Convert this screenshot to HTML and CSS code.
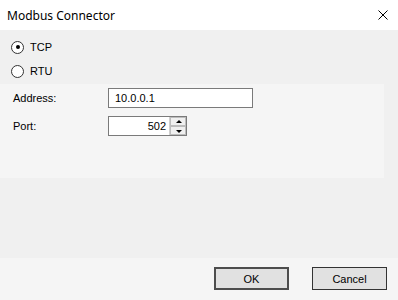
FILE: index.html
```html
<!DOCTYPE html>
<html lang="en">
<head>
    <meta charset="UTF-8">
    <title>Modbus Connector</title>
    <link rel="stylesheet" href="styles.css">
</head>
<body>
    <div class="dialog">
        <div class="titlebar">
            <span class="title">Modbus Connector</span>
            <svg class="close" width="10" height="10" viewBox="0 0 10 10">
                <path d="M0.5 0.5 L9.5 9.5 M9.5 0.5 L0.5 9.5" stroke="#000" stroke-width="1" fill="none"/>
            </svg>
        </div>
        <div class="content">
            <div class="options">
                <label class="option"><span class="radio checked"></span>TCP</label>
                <label class="option"><span class="radio"></span>RTU</label>
            </div>
            <div class="panel">
                <div class="field">
                    <span class="label">Address:</span>
                    <div class="textbox address">10.0.0.1</div>
                </div>
                <div class="field">
                    <span class="label">Port:</span>
                    <div class="textbox port">
                        <span class="value">502</span>
                        <div class="spinner">
                            <div class="spin up"></div>
                            <div class="spin down"></div>
                        </div>
                    </div>
                </div>
            </div>
        </div>
        <div class="footer">
            <button class="btn default">OK</button>
            <button class="btn">Cancel</button>
        </div>
    </div>
</body>
</html>
```

FILE: styles.css
```css
body {
    margin: 0;
    font-family: "Liberation Sans", Arial, sans-serif;
    font-size: 11px;
    color: #000;
}
.dialog {
    width: 398px;
    height: 300px;
    display: flex;
    flex-direction: column;
}
.titlebar {
    height: 30px;
    background-color: #ffffff;
    display: flex;
    align-items: center;
    justify-content: space-between;
    padding: 0 10px 0 7px;
    box-sizing: border-box;
}
.title {
    font-family: "Noto Sans", "Open Sans", sans-serif;
    font-size: 12px;
}
.content {
    height: 228px;
    background-color: #f0f0f0;
}
.options {
    padding: 5px 0 1px 11px;
}
.option {
    height: 24px;
    display: flex;
    align-items: center;
    gap: 6px;
}
.radio {
    width: 11px;
    height: 11px;
    border: 1px solid #333;
    border-radius: 50%;
    background-color: #fff;
    position: relative;
}
.radio.checked::after {
    content: "";
    position: absolute;
    left: 3.5px;
    top: 3.5px;
    width: 4px;
    height: 4px;
    border-radius: 50%;
    background-color: #000;
}
.panel {
    width: 384px;
    height: 94px;
    background-color: #f5f5f5;
    padding: 4px 0 0 0;
    box-sizing: border-box;
    display: flex;
    flex-direction: column;
    gap: 8px;
}
.field {
    display: flex;
    align-items: center;
    height: 20px;
}
.label {
    width: 95px;
    padding-left: 13px;
}
.textbox {
    height: 20px;
    box-sizing: border-box;
    border: 1px solid #7a7a7a;
    background-color: #fff;
    display: flex;
    align-items: center;
}
.address {
    width: 145px;
    padding-left: 6px;
}
.port {
    width: 79px;
    justify-content: flex-end;
}
.port .value {
    padding-right: 3px;
}
.spinner {
    width: 17px;
    height: 18px;
    display: flex;
    flex-direction: column;
    border-left: 1px solid #cfcfcf;
    box-sizing: border-box;
}
.spin {
    flex: 1;
    background-color: #f0f0f0;
    border: 1px solid #bdbdbd;
    position: relative;
}
.spin::after {
    content: "";
    position: absolute;
    left: 5px;
    border-left: 3px solid transparent;
    border-right: 3px solid transparent;
}
.up::after {
    top: 2px;
    border-bottom: 3px solid #000;
}
.down::after {
    top: 3px;
    border-top: 3px solid #000;
}
.footer {
    flex: 1;
    background-color: #f5f5f5;
    display: flex;
    justify-content: flex-end;
    align-items: flex-start;
    gap: 23px;
    padding: 9px 11px 0 0;
    box-sizing: border-box;
}
.btn {
    width: 75px;
    height: 23px;
    background-color: #e1e1e1;
    border: 1px solid #333;
    font-family: "Liberation Sans", Arial, sans-serif;
    font-size: 11px;
    color: #000;
    padding: 0;
}
.btn.default {
    border: 2px solid #4d4d4d;
}
```
